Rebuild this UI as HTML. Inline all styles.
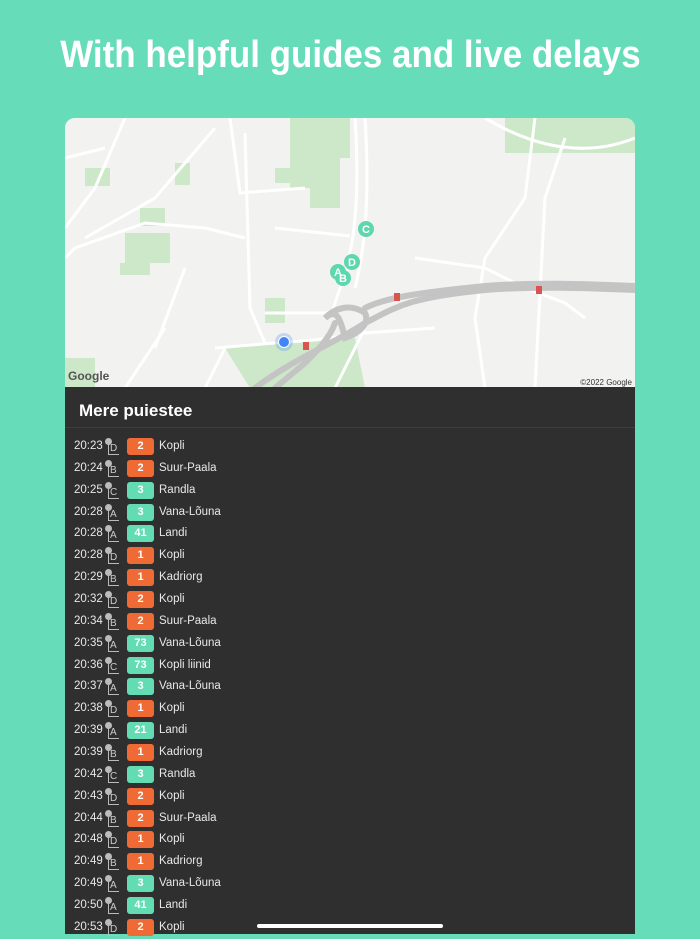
<!DOCTYPE html>
<html><head><meta charset="utf-8"><style>
*{margin:0;padding:0;box-sizing:border-box}
body{width:700px;height:934px;background:#66ddb8;position:relative;overflow:hidden;font-family:"Liberation Sans",sans-serif}
.title{position:absolute;left:0;width:700px;top:34px;text-align:center;color:#fff;font-weight:bold;font-size:38px;white-space:nowrap}
.title span{display:inline-block;transform:scaleX(0.92);transform-origin:center}
.map{position:absolute;left:65px;top:118px;width:570px;height:270px;border-radius:10px 10px 0 0;overflow:hidden;background:#f2f2f1}
.panel{position:absolute;left:65px;top:387px;width:570px;height:547px;background:#2f2f2f}
.h{position:absolute;left:14px;top:14px;color:#fff;font-weight:bold;font-size:17px}
.sep{position:absolute;left:0;right:0;top:40px;height:1px;background:#3d3d3d}
.row{position:absolute;left:0;height:22px;width:570px;color:#e8e8e8;font-size:11.5px}
.t{position:absolute;left:9px;top:4px}
.pin{position:absolute;left:40px;top:2px;width:14px;height:18px}
.pin i{position:absolute;left:0;top:0;width:7px;height:7px;border-radius:50%;background:#bbb}
.pin b{position:absolute;left:3px;top:5px;width:1px;height:12px;background:#bbb}
.pin u{position:absolute;left:3px;top:16px;width:11px;height:1px;background:#bbb}
.pin s{position:absolute;left:5px;top:5px;font-size:10px;color:#ccc;text-decoration:none;font-weight:normal}
.bd{position:absolute;left:62px;top:2px;width:27px;height:17px;border-radius:3px;color:#fff;font-weight:bold;font-size:11px;text-align:center;line-height:17px}
.o{background:#ef6a35}.g{background:#63dcb3}
.n{position:absolute;left:94px;top:4px}
.home{position:absolute;left:257px;top:924px;width:186px;height:4px;border-radius:2px;background:#fff}
#rows{position:absolute;left:0;top:2px;width:570px}
</style></head><body>
<div class="title"><span>With helpful guides and live delays</span></div>
<div class="map">
<svg width="570" height="270" viewBox="0 0 570 270">
<rect width="570" height="270" fill="#f2f2f1"/>
<g fill="#cde8c9">
<polygon points="225,0 285,0 285,40 275,40 275,90 245,90 245,70 225,70"/>
<polygon points="160,230 290,220 300,270 185,270"/>
<rect x="200" y="180" width="20" height="25"/>
<rect x="60" y="115" width="45" height="30"/><rect x="55" y="145" width="30" height="12"/>
<rect x="75" y="90" width="25" height="18"/><rect x="110" y="45" width="15" height="22"/>
<rect x="20" y="50" width="25" height="18"/><rect x="210" y="50" width="20" height="15"/>
<rect x="0" y="240" width="30" height="30"/><rect x="440" y="0" width="130" height="35"/>
</g>
<g stroke="#fff" fill="none" stroke-width="3">
<path d="M290,0 C295,80 290,130 275,170 L265,200"/>
<path d="M300,0 C305,80 300,130 290,170"/>
<path d="M420,0 C470,30 520,40 570,20"/>
<path d="M0,40 L40,30 M20,120 L90,80 L150,10"/>
<path d="M0,140 L10,130 L80,105 L140,110 L180,120"/>
<path d="M180,15 L185,190 L200,225"/>
<path d="M165,0 L175,75 L240,70"/>
<path d="M210,110 L285,118"/>
<path d="M150,230 L210,225 L250,222 L300,215 L370,210"/>
<path d="M100,210 L60,270 M160,230 L140,270"/>
<path d="M200,195 L260,195 L280,190"/>
<path d="M350,140 L420,150 L460,170 L500,185 L520,200"/>
<path d="M470,0 L460,80 L420,140 L410,200 L420,270"/>
<path d="M500,20 L480,80 L470,270"/>
<path d="M60,0 L30,70 L0,110"/>
<path d="M300,210 L270,270 M120,150 L90,230"/>
</g>
<g stroke="#c4c4c4" fill="none" stroke-width="6" stroke-linecap="round">
<path d="M190,270 C230,240 270,225 300,205 C330,190 340,180 420,172 C470,168 520,170 570,172"/>
<path d="M300,190 C320,180 350,175 420,168 C470,164 520,166 570,168"/>
<path d="M260,200 C270,190 285,185 300,195 C305,205 295,215 280,220 C275,200 272,190 260,200 Z"/>
<path d="M270,205 C265,220 250,235 240,245 L210,270"/>
</g>
<g fill="#d9534f"><rect x="238" y="224" width="6" height="8"/><rect x="329" y="175" width="6" height="8"/><rect x="471" y="168" width="6" height="8"/></g>
<circle cx="219" cy="224" r="9" fill="#4285f4" opacity="0.25"/>
<circle cx="219" cy="224" r="5.5" fill="#4285f4" stroke="#fff" stroke-width="1"/>
<g fill="#5ed6ae">
<circle cx="301" cy="111" r="8"/><circle cx="287" cy="144" r="8"/><circle cx="273" cy="154" r="8"/><circle cx="278" cy="160" r="8"/>
</g>
<g fill="#fff" font-family="Liberation Sans" font-size="11" font-weight="bold" text-anchor="middle">
<text x="301" y="115">C</text><text x="287" y="148">D</text><text x="273" y="158">A</text><text x="278" y="164">B</text>
</g>
<text x="3" y="262" font-family="Liberation Sans" font-size="12" font-weight="bold" fill="#555">Google</text>
<text x="567" y="267" text-anchor="end" font-family="Liberation Sans" font-size="8" fill="#333">©2022 Google</text>
</svg>
</div>
<div class="panel">
<div class="h">Mere puiestee</div>
<div class="sep"></div>
<div id="rows">
<div class="row" style="top:47px"><span class="t">20:23</span><div class="pin"><i></i><b></b><u></u><s>D</s></div><div class="bd o">2</div><span class="n">Kopli</span></div>
<div class="row" style="top:69px"><span class="t">20:24</span><div class="pin"><i></i><b></b><u></u><s>B</s></div><div class="bd o">2</div><span class="n">Suur-Paala</span></div>
<div class="row" style="top:91px"><span class="t">20:25</span><div class="pin"><i></i><b></b><u></u><s>C</s></div><div class="bd g">3</div><span class="n">Randla</span></div>
<div class="row" style="top:113px"><span class="t">20:28</span><div class="pin"><i></i><b></b><u></u><s>A</s></div><div class="bd g">3</div><span class="n">Vana-Lõuna</span></div>
<div class="row" style="top:134px"><span class="t">20:28</span><div class="pin"><i></i><b></b><u></u><s>A</s></div><div class="bd g">41</div><span class="n">Landi</span></div>
<div class="row" style="top:156px"><span class="t">20:28</span><div class="pin"><i></i><b></b><u></u><s>D</s></div><div class="bd o">1</div><span class="n">Kopli</span></div>
<div class="row" style="top:178px"><span class="t">20:29</span><div class="pin"><i></i><b></b><u></u><s>B</s></div><div class="bd o">1</div><span class="n">Kadriorg</span></div>
<div class="row" style="top:200px"><span class="t">20:32</span><div class="pin"><i></i><b></b><u></u><s>D</s></div><div class="bd o">2</div><span class="n">Kopli</span></div>
<div class="row" style="top:222px"><span class="t">20:34</span><div class="pin"><i></i><b></b><u></u><s>B</s></div><div class="bd o">2</div><span class="n">Suur-Paala</span></div>
<div class="row" style="top:244px"><span class="t">20:35</span><div class="pin"><i></i><b></b><u></u><s>A</s></div><div class="bd g">73</div><span class="n">Vana-Lõuna</span></div>
<div class="row" style="top:266px"><span class="t">20:36</span><div class="pin"><i></i><b></b><u></u><s>C</s></div><div class="bd g">73</div><span class="n">Kopli liinid</span></div>
<div class="row" style="top:287px"><span class="t">20:37</span><div class="pin"><i></i><b></b><u></u><s>A</s></div><div class="bd g">3</div><span class="n">Vana-Lõuna</span></div>
<div class="row" style="top:309px"><span class="t">20:38</span><div class="pin"><i></i><b></b><u></u><s>D</s></div><div class="bd o">1</div><span class="n">Kopli</span></div>
<div class="row" style="top:331px"><span class="t">20:39</span><div class="pin"><i></i><b></b><u></u><s>A</s></div><div class="bd g">21</div><span class="n">Landi</span></div>
<div class="row" style="top:353px"><span class="t">20:39</span><div class="pin"><i></i><b></b><u></u><s>B</s></div><div class="bd o">1</div><span class="n">Kadriorg</span></div>
<div class="row" style="top:375px"><span class="t">20:42</span><div class="pin"><i></i><b></b><u></u><s>C</s></div><div class="bd g">3</div><span class="n">Randla</span></div>
<div class="row" style="top:397px"><span class="t">20:43</span><div class="pin"><i></i><b></b><u></u><s>D</s></div><div class="bd o">2</div><span class="n">Kopli</span></div>
<div class="row" style="top:419px"><span class="t">20:44</span><div class="pin"><i></i><b></b><u></u><s>B</s></div><div class="bd o">2</div><span class="n">Suur-Paala</span></div>
<div class="row" style="top:440px"><span class="t">20:48</span><div class="pin"><i></i><b></b><u></u><s>D</s></div><div class="bd o">1</div><span class="n">Kopli</span></div>
<div class="row" style="top:462px"><span class="t">20:49</span><div class="pin"><i></i><b></b><u></u><s>B</s></div><div class="bd o">1</div><span class="n">Kadriorg</span></div>
<div class="row" style="top:484px"><span class="t">20:49</span><div class="pin"><i></i><b></b><u></u><s>A</s></div><div class="bd g">3</div><span class="n">Vana-Lõuna</span></div>
<div class="row" style="top:506px"><span class="t">20:50</span><div class="pin"><i></i><b></b><u></u><s>A</s></div><div class="bd g">41</div><span class="n">Landi</span></div>
<div class="row" style="top:528px"><span class="t">20:53</span><div class="pin"><i></i><b></b><u></u><s>D</s></div><div class="bd o">2</div><span class="n">Kopli</span></div>
</div>
</div>
<div class="home"></div>
</body></html>
